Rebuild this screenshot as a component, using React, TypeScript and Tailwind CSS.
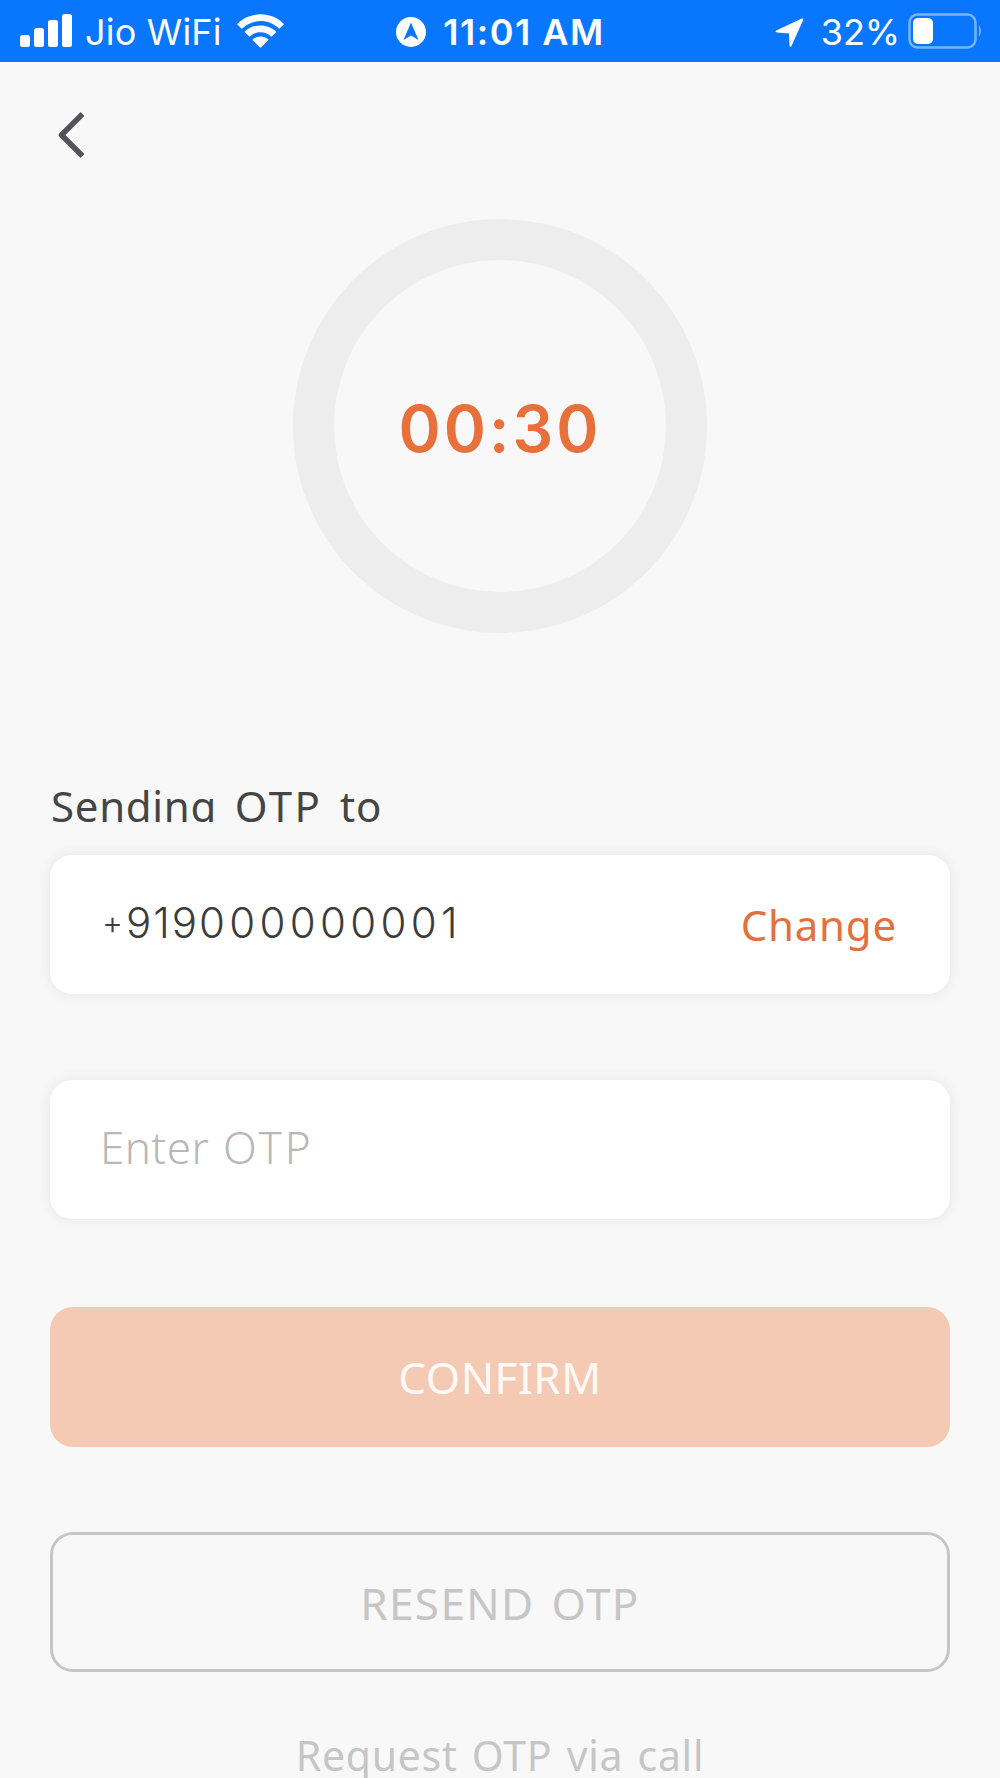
import React from "react";

function StatusBar() {
  return (
    <header className="flex h-[62px] shrink-0 bg-[#0877fd] font-['Inter',sans-serif] text-white">
      <div className="flex w-1/3 items-start pl-5 pt-[13px]">
        <svg width="53" height="35" viewBox="0 0 53 35" fill="currentColor" className="shrink-0">
          <rect x="0" y="22" width="10" height="12" rx="2.5" />
          <rect x="14" y="15" width="10" height="19" rx="2.5" />
          <rect x="28" y="7" width="10" height="27" rx="2.5" />
          <rect x="42" y="1" width="10" height="33" rx="2.5" />
        </svg>
        <span className="ml-3 w-[138px] whitespace-nowrap text-[36px] font-normal leading-[39px] tracking-[0.2px]">Jio WiFi</span>
        <svg width="47" height="36" viewBox="0 0 48 36" fill="currentColor" className="ml-[14px] shrink-0">
          <path d="M24 1C14.5 1 6.200 4.700 0.500 10.500Q0 11 0.500 11.600L4.300 15.300Q5 15.900 5.600 15.300C10.400 10.600 16.800 7.900 24 7.900S37.600 10.600 42.400 15.300Q43 15.900 43.700 15.300L47.500 11.600Q48 11 47.500 10.500C41.800 4.700 33.500 1 24 1Z" />
          <path d="M24 12.300C17.800 12.300 12.300 14.600 8.300 18.300Q7.700 18.900 8.300 19.500L12.300 23.400Q12.900 23.900 13.500 23.400C16.300 20.900 19.900 19.400 24 19.400S31.700 20.900 34.500 23.400Q35.100 23.900 35.700 23.400L39.700 19.500Q40.300 18.900 39.700 18.300C35.700 14.600 30.200 12.300 24 12.300Z" />
          <path d="M24 23.500C20.900 23.500 18.200 24.600 16.200 26.400Q15.600 27 16.200 27.600L23.300 34.600Q24 35.300 24.700 34.600L31.800 27.600Q32.400 27 31.800 26.400C29.800 24.600 27.100 23.500 24 23.500Z" />
        </svg>
      </div>
      <div className="flex w-1/3 items-start pl-[63px] pt-[13px]">
        <svg width="30" height="38" viewBox="0 0 30 38" className="shrink-0">
          <circle cx="15" cy="19" r="15" fill="white" />
          <path d="M15 9.500L22.500 27L15 22.500L7.500 27Z" fill="#0877fd" />
        </svg>
        <span className="ml-[17px] whitespace-nowrap text-[36px] font-semibold leading-[39px] tracking-[1.500px]">11:01 AM</span>
      </div>
      <div className="flex flex-1 items-start pl-[108px] pt-[13px]">
        <svg width="29" height="36" viewBox="0 0 29 36" fill="currentColor" className="shrink-0">
          <path d="M1.200 17.500L26.800 5.500Q28.800 5 28.200 7L16.500 33Q15 35 14.500 32.500L14 20.500L2 19.500Q-0.500 19 1.200 17.500Z" />
        </svg>
        <span className="ml-[17px] w-[78px] whitespace-nowrap text-[36px] font-normal leading-[39px]">32%</span>
        <svg width="76" height="37" viewBox="0 0 76 37" className="ml-[9px] shrink-0">
          <rect x="1.500" y="1.500" width="66" height="33" rx="8" fill="none" stroke="white" strokeOpacity=".45" strokeWidth="2.500" />
          <rect x="5" y="5" width="20" height="26" rx="5" fill="white" />
          <path d="M71 12Q75 18 71 24Z" fill="white" fillOpacity=".45" />
        </svg>
      </div>
    </header>
  );
}

export default function App() {
  return (
    <div className="flex h-[1778px] w-[1000px] flex-col overflow-hidden bg-[#f8f8f8] font-['Noto_Sans',sans-serif] text-[42px] leading-[60px]">
      <StatusBar />
      <main className="flex flex-col px-[50px]">
        <button aria-label="Back" className="mt-[48px] h-[50px] w-[50px] pl-[7px]">
          <svg width="30" height="50" viewBox="0 0 30 50" fill="none" stroke="#53525a" strokeWidth="5.5" strokeLinejoin="round">
            <path d="M25.500 4L4.500 25L25.500 46" />
          </svg>
        </button>
        <div className="mt-[59px] flex h-[414px] w-[414px] items-center justify-center self-center rounded-full border-[41px] border-[#ededed]">
          <span className="mt-[5px] whitespace-nowrap font-['Inter',sans-serif] text-[64px] font-semibold leading-[80px] tracking-[3px] text-[#e8703a]">00:30</span>
        </div>
        <div className="mt-[144px] h-[45px] overflow-hidden pl-px">
          <span className="-mt-px block whitespace-nowrap tracking-[0.700px] [word-spacing:6px] text-[#454545]">
            Sending <span className="tracking-[2.500px]">OTP</span> to
          </span>
        </div>
        <div className="mt-[33px] flex h-[139px] items-center justify-between rounded-[22px] bg-white pl-[52px] pr-[53px] shadow-[0_0_12px_3px_rgba(0,0,0,0.055)]">
          <div className="-mt-[3px] flex items-center font-['Inter',sans-serif] font-light text-[#3c3c3c]">
            <span className="w-[24px] text-[32px]">+</span>
            <span className="tracking-[2px]">919</span>
            <span className="tracking-[4.300px]">000000001</span>
          </div>
          <button className="tracking-[0.800px] text-[#e3703f]">Change</button>
        </div>
        <div className="mt-[86px] flex h-[139px] items-center rounded-[22px] bg-white pl-[50px] shadow-[0_0_12px_3px_rgba(0,0,0,0.055)]">
          <span className="-mt-[6px] text-[44px] font-light tracking-[0.400px] [word-spacing:2px] text-[#b8b8b8]">
            Enter <span className="tracking-[3px]">OTP</span>
          </span>
        </div>
        <button className="mt-[88px] h-[140px] rounded-[23px] bg-[#f4cab5] text-[44px] tracking-[0.500px] text-[#fffaf5]">CONFIRM</button>
        <button className="mt-[85px] h-[140px] rounded-[23px] border-[3px] border-[#c6c6c6] pt-[2px] text-[44px] tracking-[1.400px] [word-spacing:4px] text-[#c6c6c6]">RESEND OTP</button>
        <button className="mt-[53px] self-center whitespace-nowrap text-[41px] tracking-[0.700px] [word-spacing:3px] text-[#c6c6c6]">Request OTP via call</button>
      </main>
    </div>
  );
}
